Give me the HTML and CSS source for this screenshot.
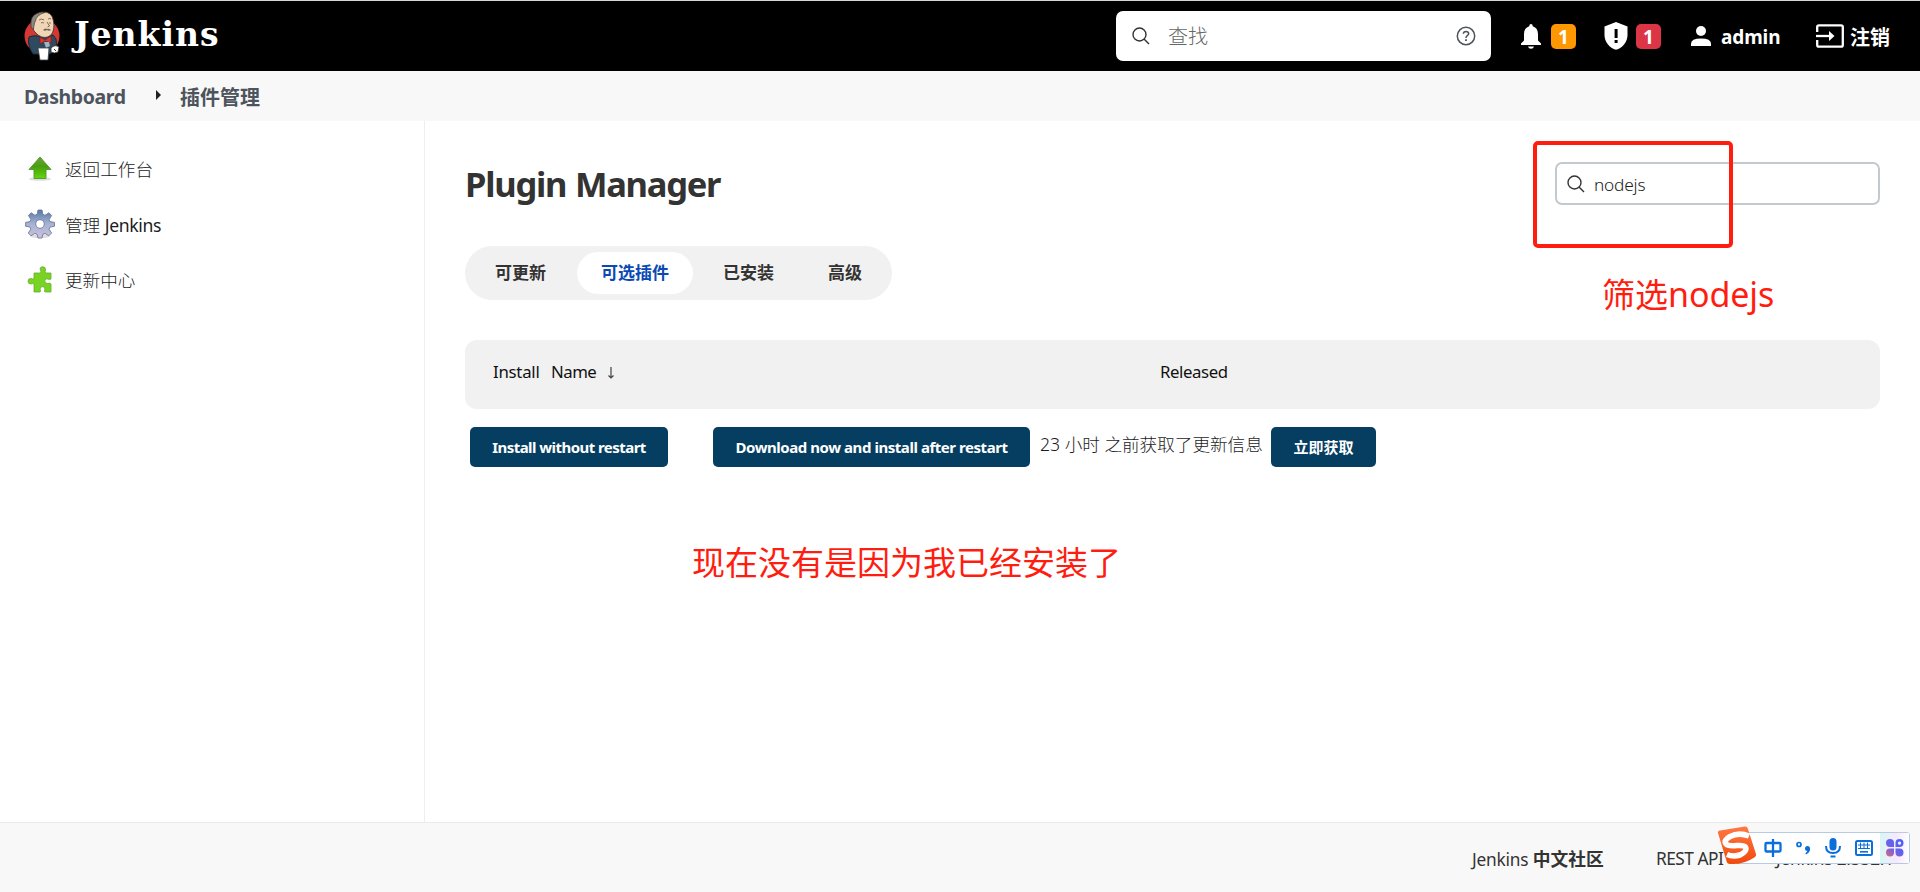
FILE: index.html
```html
<!DOCTYPE html>
<html lang="zh-CN">
<head>
<meta charset="utf-8">
<title>Plugin Manager [Jenkins]</title>
<link rel="stylesheet" href="styles.css">
</head>
<body>
<header class="header">
  <a class="brand">
    <svg class="brand-logo" width="36" height="50" viewBox="0 0 36 50">
      <circle cx="18" cy="25" r="17.500" fill="#d33833"/>
      <path d="M5 26 Q12 23 18 27 L29 24 L32 28 L33 36 L26 43 L9 43 Q3 34 5 26Z" fill="#2f4a5f" stroke="#1c2a36" stroke-width="1"/>
      <path d="M8 15 Q6 3 18 1 Q28 0 29.500 10 Q31 19 27 24 Q21 29 14 24 L10 20Z" fill="#f0d6b7" stroke="#3a302a" stroke-width=".8"/>
      <path d="M7 15 Q6 5 13 2.500 Q17 .5 21 1.500 Q12 4 11.500 10 L10.500 12 L9.500 18 Q7 18 7 15Z" fill="#8b8781" stroke="#3a302a" stroke-width=".6"/>
      <path d="M15 9q2-2 5 0M24 8q2-1 3 0M17 12q1-1 3 0M25 12h2M23 11l2.500 4-2 1" fill="none" stroke="#6a5040" stroke-width=".8"/>
      <path d="M19 19q2-2.500 4-1 2-1 4 1-2 1.500-4 0-2 1.500-4 0z" fill="#6f665d"/>
      <path d="M16 26l5 3 6-4v7l-6-2-5 3z" fill="#d33833" stroke="#7b1a18" stroke-width=".6"/>
      <path d="M20 31h5l1 4-4 2z" fill="#9fb5c4"/>
      <path d="M14 37h11l-1 12h-8z" fill="#fff" stroke="#3a4650" stroke-width=".8"/>
      <path d="M27 37q4-4 8-1l-1 5q-4 2-7 0z" fill="#fff" stroke="#3a302a" stroke-width=".8"/>
      <path d="M30 38l2 2" stroke="#333"/>
    </svg>
    <span class="brand-name">Jenkins</span>
  </a>
  <div class="global-search">
    <svg width="18" height="18" viewBox="0 0 18 18" fill="none" stroke="#333" stroke-width="1.400"><circle cx="7.500" cy="7.500" r="6.500"/><path d="M12 12l5 5"/></svg>
    <span class="placeholder">查找</span>
    <svg width="20" height="20" viewBox="0 0 20 20" fill="none" stroke="#4d545d" stroke-width="1.500"><circle cx="10" cy="10" r="8.700"/><path d="M7.300 7.800q.2-2.400 2.700-2.400t2.700 2.200q0 1.200-1.400 2.100-1.300.9-1.300 2.300"/><path d="M10 13.300v1.600" stroke-width="1.800"/></svg>
  </div>
  <div class="notice bell">
    <svg width="20" height="25" viewBox="0 0 20 25" fill="#fff"><path d="M10 0q1.600 0 1.800 2.200Q17 4 17 10v6.500l3 3V21H0v-1.500l3-3V10q0-6 5.200-7.800Q8.400 0 10 0zM7 22.500h6q-.5 2.300-3 2.300t-3-2.300z"/></svg>
    <span class="count warn">1</span>
  </div>
  <div class="notice shield">
    <svg width="24" height="28" viewBox="0 0 24 28"><path fill="#fff" d="M12 0l11.500 4.600V13c0 7-5 13-11.500 14.800C5.500 26 .5 20 .5 13V4.600z"/><path fill="#000" d="M10.600 7h3v9h-3zM10.600 18h3v3h-3z"/></svg>
    <span class="count danger">1</span>
  </div>
  <a class="user">
    <svg width="20" height="20" viewBox="0 0 20 20" fill="#fff"><circle cx="10" cy="5" r="5"/><path d="M0 20v-2.200q0-5.300 10-5.300t10 5.300V20z"/></svg>
    <span class="user-name">admin</span>
  </a>
  <a class="logout">
    <svg width="28" height="24" viewBox="0 0 28 24"><path d="M1.200 8V3Q1.200 1.300 3 1.300h22q1.800 0 1.800 1.700v18q0 1.700-1.800 1.700H3Q1.200 22.700 1.200 21v-5" fill="none" stroke="#fff" stroke-width="2.300"/><path d="M0 12h14" stroke="#fff" stroke-width="2.300"/><path d="M13 7l5.500 5-5.500 5z" fill="#fff"/></svg>
    <span>注销</span>
  </a>
</header>
<nav class="breadcrumbs">
  <span class="crumb-home">Dashboard</span>
  <svg width="5" height="10" viewBox="0 0 5 10"><path d="M0 0l5 5-5 5z" fill="#222"/></svg>
  <span>插件管理</span>
</nav>
<div class="page">
  <aside class="sidebar">
    <a class="task">
      <svg width="30" height="30" viewBox="0 0 30 30"><defs><linearGradient id="up" x2="0" y2="1"><stop offset="0" stop-color="#6f9f3c"/><stop offset=".45" stop-color="#48a010"/><stop offset="1" stop-color="#61d80c"/></linearGradient></defs><ellipse cx="15" cy="25" rx="11" ry="1.800" fill="#ddd"/><path d="M15 3L26 15.500H21V24.500H9V15.500H4Z" fill="url(#up)" stroke="#5b9a35" stroke-width="1" stroke-linejoin="round"/></svg>
      <span>返回工作台</span>
    </a>
    <a class="task">
      <svg width="30" height="30" viewBox="0 0 30 30"><defs><linearGradient id="gear" x2="0" y2="1"><stop offset="0" stop-color="#5577a5"/><stop offset=".5" stop-color="#a6b3d2"/><stop offset="1" stop-color="#cdc0df"/></linearGradient></defs><ellipse cx="15" cy="27" rx="10" ry="2" fill="#ddd"/><path fill="url(#gear)" stroke="#71799d" stroke-width=".9" stroke-linejoin="round" fill-rule="evenodd" d="M13 1h4l.8 4.300 2.200 1 3.900-2.500 2.700 2.700-2.400 3.900.9 2.200 4.400.8v3.800l-4.400.9-1 2.200 2.500 3.700-2.800 2.800-3.800-2.500-2.200 1L17 29h-4l-.9-3.700-2.200-1L6 26.800 3.300 24l2.500-3.800-.9-2.200-4.300-.8v-3.800l4.300-.8 1-2.200-2.500-3.900L6.200 3.800l3.700 2.500 2.200-1zM15 10.700a4.300 4.300 0 1 0 .01 0z"/></svg>
      <span>管理 <span class="task-latin">Jenkins</span></span>
    </a>
    <a class="task">
      <svg width="30" height="30" viewBox="0 0 30 30"><path fill="#78d325" stroke="#66ae2a" stroke-width=".8" stroke-linejoin="round" d="M9 8h6.500q1-1 0-2.500Q14.200 2 17.500 1.800T20.500 5q-1 2 .5 3h5v6q-1.500 1-3 0-3-1-3.200 1.800T23 18.500q2-1 3 .5v8h-6q-1.200-1.200-.2-2.700.5-2.500-2.300-2.600t-2.400 2.600q1 1.600 0 2.700H9V19q-1.200-1-2.500 0Q3 19.300 3 16.200t3.500-2.700q1.500 1 2.500 0z"/></svg>
      <span>更新中心</span>
    </a>
  </aside>
  <main class="main">
    <div class="title-row">
      <h1 class="title">Plugin Manager</h1>
      <div class="filter">
        <svg width="18" height="18" viewBox="0 0 18 18" fill="none" stroke="#333" stroke-width="1.400"><circle cx="7.500" cy="7.500" r="6.500"/><path d="M12 12l5 5"/></svg>
        <span class="filter-text">nodejs</span>
        <div class="mark-box"></div>
        <div class="mark-filter">筛选<span class="mark-latin">nodejs</span></div>
      </div>
    </div>
    <div class="tabs">
      <a class="tab">可更新</a><a class="tab active">可选插件</a><a class="tab">已安装</a><a class="tab last">高级</a>
    </div>
    <div class="table-head">
      <span class="col-install">Install</span>
      <span class="col-name">Name</span>
      <svg class="sort" width="8" height="12" viewBox="0 0 8 12" fill="none" stroke="#444" stroke-width="1.200"><path d="M4 0v11M1.500 8.500l2.500 2.500 2.500-2.500"/></svg>
      <span class="col-released">Released</span>
    </div>
    <div class="actions">
      <a class="button install">Install without restart</a>
      <a class="button download">Download now and install after restart</a>
      <span class="update-info">23 小时 之前获取了更新信息</span>
      <a class="button check">立即获取</a>
    </div>
    <div class="mark-note">现在没有是因为我已经安装了</div>
  </main>
</div>
<footer class="footer">
  <span class="community">Jenkins <b>中文社区</b></span>
  <span class="rest">REST API</span>
  <span class="version">Jenkins 2.332.1</span>
  <div class="ime">
    <svg class="ime-logo" width="40" height="40" viewBox="0 0 40 40"><defs><linearGradient id="so" x2="0" y2="1"><stop offset="0" stop-color="#ff7843"/><stop offset="1" stop-color="#f04a0c"/></linearGradient></defs><path d="M1 7Q.500 5 3 4.500L28 .5q2-.3 2.600 1.500L39 28q.6 2-1.300 3.200Q26 39 13 38q-3 0-3.500-3z" fill="url(#so)"/><path d="M32 10Q22 6 13 10.500q-7 4-4 7.500 2 2.500 11 1.500 9-.5 9 3t-6 6.500q-7 2-13-.5" fill="none" stroke="#fff" stroke-width="5.500"/></svg>
    <svg width="18" height="18" viewBox="0 0 18 18" fill="none" stroke="#0a6fda" stroke-width="2.300"><rect x="1.500" y="4" width="15" height="8.500" rx="1"/><path d="M9 0v18"/></svg>
    <svg width="15" height="14" viewBox="0 0 15 14"><circle cx="3" cy="3.500" r="2" fill="none" stroke="#0a6fda" stroke-width="1.700"/><circle cx="11.500" cy="7.500" r="2.500" fill="#0a6fda"/><path d="M14 7q.5 4.500-4 6.500l-.6-1q2.600-2 2.600-5z" fill="#0a6fda"/></svg>
    <svg width="16" height="20" viewBox="0 0 16 20"><rect x="4.500" y="0" width="7" height="12.500" rx="3.500" fill="#0a6fda"/><path d="M1 8q0 7 7 7t7-7M5.500 18.500h5" fill="none" stroke="#0a6fda" stroke-width="2"/></svg>
    <svg width="18" height="16" viewBox="0 0 18 16" fill="none" stroke="#0a6fda"><rect x="1" y="1" width="16" height="14" rx="1.500" stroke-width="2"/><path d="M3 5h12M3 8.500h12M5.500 2.500v6M9 2.500v6M12.500 2.500v6" stroke-width="1"/><path d="M5 11.800h8" stroke-width="1.600"/></svg>
    <span class="ime-apps"><svg width="18" height="18" viewBox="0 0 18 18"><defs><linearGradient id="ap" x1="1" x2="0" y2="1"><stop offset="0" stop-color="#3f66ff"/><stop offset=".6" stop-color="#6c62e8"/><stop offset="1" stop-color="#e06a70"/></linearGradient></defs><path fill="url(#ap)" fill-rule="evenodd" d="M4 0a4 4 0 0 1 4 4v4H4a4 4 0 0 1 0-8zM13.500 0a4 4 0 0 1 0 8h-4V4a4 4 0 0 1 4-4zM4 9.500h4v4a4 4 0 1 1-4-4zM9.500 9.500h4a4 4 0 1 1-4 4zM13.500 2.500a1.600 1.600 0 1 0 .01 0z"/></svg></span>
  </div>
</footer>
</body>
</html>
```
FILE: styles.css
```css
* { box-sizing: border-box; }
body {
  margin: 0;
  height: 892px;
  display: flex;
  flex-direction: column;
  overflow: hidden;
  background: #fff;
  color: #333;
  font-family: "Noto Sans", "Noto Sans CJK SC", sans-serif;
  font-size: 17.6px;
  white-space: nowrap;
}
svg { display: block; flex: none; }
.header {
  height: 71px;
  flex: none;
  display: flex;
  align-items: center;
  border-top: 1px solid #d5d9d6;
  background: #000;
  color: #fff;
  font-weight: 700;
}
.brand { display: flex; align-items: center; width: 1116px; padding-left: 24px; }
.brand-name { margin: -3px 0 0 14px; font: 700 33px/40px "DejaVu Serif", serif; letter-spacing: 1px; }
.global-search {
  width: 375px;
  height: 50px;
  display: flex;
  align-items: center;
  padding: 0 15px 0 16px;
  border-radius: 7px;
  background: #fff;
}
.placeholder { flex: 1; margin: 1px 0 0 18px; color: #666; font-size: 20px; font-weight: 300; line-height: 30px; }
.notice { display: flex; align-items: center; gap: 10px; }
.bell { margin-left: 30px; }
.shield { margin-left: 28px; gap: 8px; }
.count { width: 25px; height: 25px; border-radius: 5px; font-size: 19px; line-height: 26px; text-align: center; }
.warn { background: #ff9800; }
.danger { background: #dc3545; }
.user { display: flex; align-items: center; gap: 10px; margin-left: 30px; }
.user-name { width: 60px; padding-top: 2px; font-size: 19px; letter-spacing: -.1px; }
.logout { display: flex; align-items: center; gap: 6px; margin-left: 35px; font-size: 20px; }
.breadcrumbs {
  height: 50px;
  flex: none;
  display: flex;
  align-items: center;
  padding: 0 0 0 24px;
  background: #f8f8f8;
  color: #4d545d;
  font-size: 20px;
  font-weight: 700;
}
.breadcrumbs svg { margin-top: -2px; }
.crumb-home { width: 132px; font-size: 19.5px; letter-spacing: -.4px; }
.breadcrumbs svg + span { margin-left: 19px; }
.page { flex: 1; display: flex; min-height: 0; }
.sidebar { width: 425px; border-right: 1px solid #eee; padding: 20px 0 0 25px; color: #1c1c1c; font-weight: 300; }
.task { height: 55.5px; display: flex; align-items: center; gap: 10px; }
.task-latin { font-weight: 400; letter-spacing: -.35px; }
.main { flex: 1; padding: 41px 40px 0 40px; }
.title-row { height: 84px; display: flex; justify-content: space-between; }
.title { margin: -1px 0 0; font-size: 34.5px; line-height: 46px; letter-spacing: -1.25px; word-spacing: 1px; }
.filter {
  position: relative;
  width: 325px;
  height: 43px;
  display: flex;
  align-items: center;
  gap: 9px;
  padding-left: 10px;
  border: 2px solid #c3cacf;
  border-radius: 7px;
}
.filter-text { padding-top: 2px; color: #1c1c1c; font-size: 17.3px; font-weight: 350; letter-spacing: -.2px; }
.mark-box { position: absolute; left: -24px; top: -23px; width: 200px; height: 107px; border: 4px solid #ff1d10; border-radius: 5px; }
.mark-filter { position: absolute; left: 45px; top: 106px; color: #ff1d10; font-size: 33px; line-height: 48px; }
.mark-latin { font-size: 34px; letter-spacing: -.1px; }
.tabs {
  width: 427px;
  height: 54px;
  display: flex;
  align-items: center;
  padding-left: 6px;
  border-radius: 27px;
  background: #f1f1f1;
  font-size: 17px;
  font-weight: 700;
}
.tab { height: 42px; padding: 0 24px; border-radius: 21px; line-height: 42px; }
.tab:first-child { width: 106px; }
.tab.active { width: 116px; margin-right: 6px; background: #fff; color: #0b4ab3; }
.tab.last { margin-left: 6px; }
.table-head {
  height: 69px;
  display: flex;
  align-items: center;
  margin-top: 40px;
  padding: 0 0 7px 28px;
  border-radius: 12px;
  background: #f1f1f1;
  color: #111;
  font-size: 16.8px;
}
.col-install { width: 58px; letter-spacing: -.25px; }
.col-name { width: 56px; letter-spacing: -.5px; }
.sort { margin-top: 3px; }
.col-released { margin-left: 545px; letter-spacing: -.4px; }
.actions { display: flex; margin: 18px 0 0 5px; }
.button { height: 40px; border-radius: 5px; background: #063e61; color: #fff; font-size: 15px; font-weight: 700; line-height: 41px; text-align: center; }
.install { width: 198px; margin-right: 45px; letter-spacing: -.55px; }
.download { width: 317px; letter-spacing: -.45px; }
.check { width: 105px; }
.update-info { width: 241px; padding-left: 10px; color: #1c1c1c; font-weight: 300; line-height: 35px; }
.mark-note { margin: 72px 0 0 227px; color: #ff1d10; font-size: 33px; line-height: 48px; }
.footer {
  position: relative;
  height: 70px;
  flex: none;
  display: flex;
  align-items: center;
  padding: 1px 0 0 1472px;
  border-top: 1px solid #eaeaea;
  background: #f8f8f8;
  font-size: 17.3px;
}
.community { width: 184px; letter-spacing: -.2px; }
.community b { font-size: 17.8px; letter-spacing: 0; }
.rest { width: 120px; letter-spacing: -.5px; }
.version { letter-spacing: -.2px; }
.ime {
  position: absolute;
  left: 1735px;
  top: 9px;
  width: 175px;
  height: 32px;
  display: flex;
  align-items: center;
  gap: 14px;
  padding-left: 28px;
  border: 1px solid #b5cbe5;
  border-radius: 3px;
  background: #fff;
}
.ime-logo { position: absolute; left: -19px; top: -7px; }
.ime-apps { height: 30px; width: 30px; display: flex; align-items: center; justify-content: center; margin-left: -7px; background: linear-gradient(90deg, #d8f6f5, #fae9fb 60%, #fff); }
```
